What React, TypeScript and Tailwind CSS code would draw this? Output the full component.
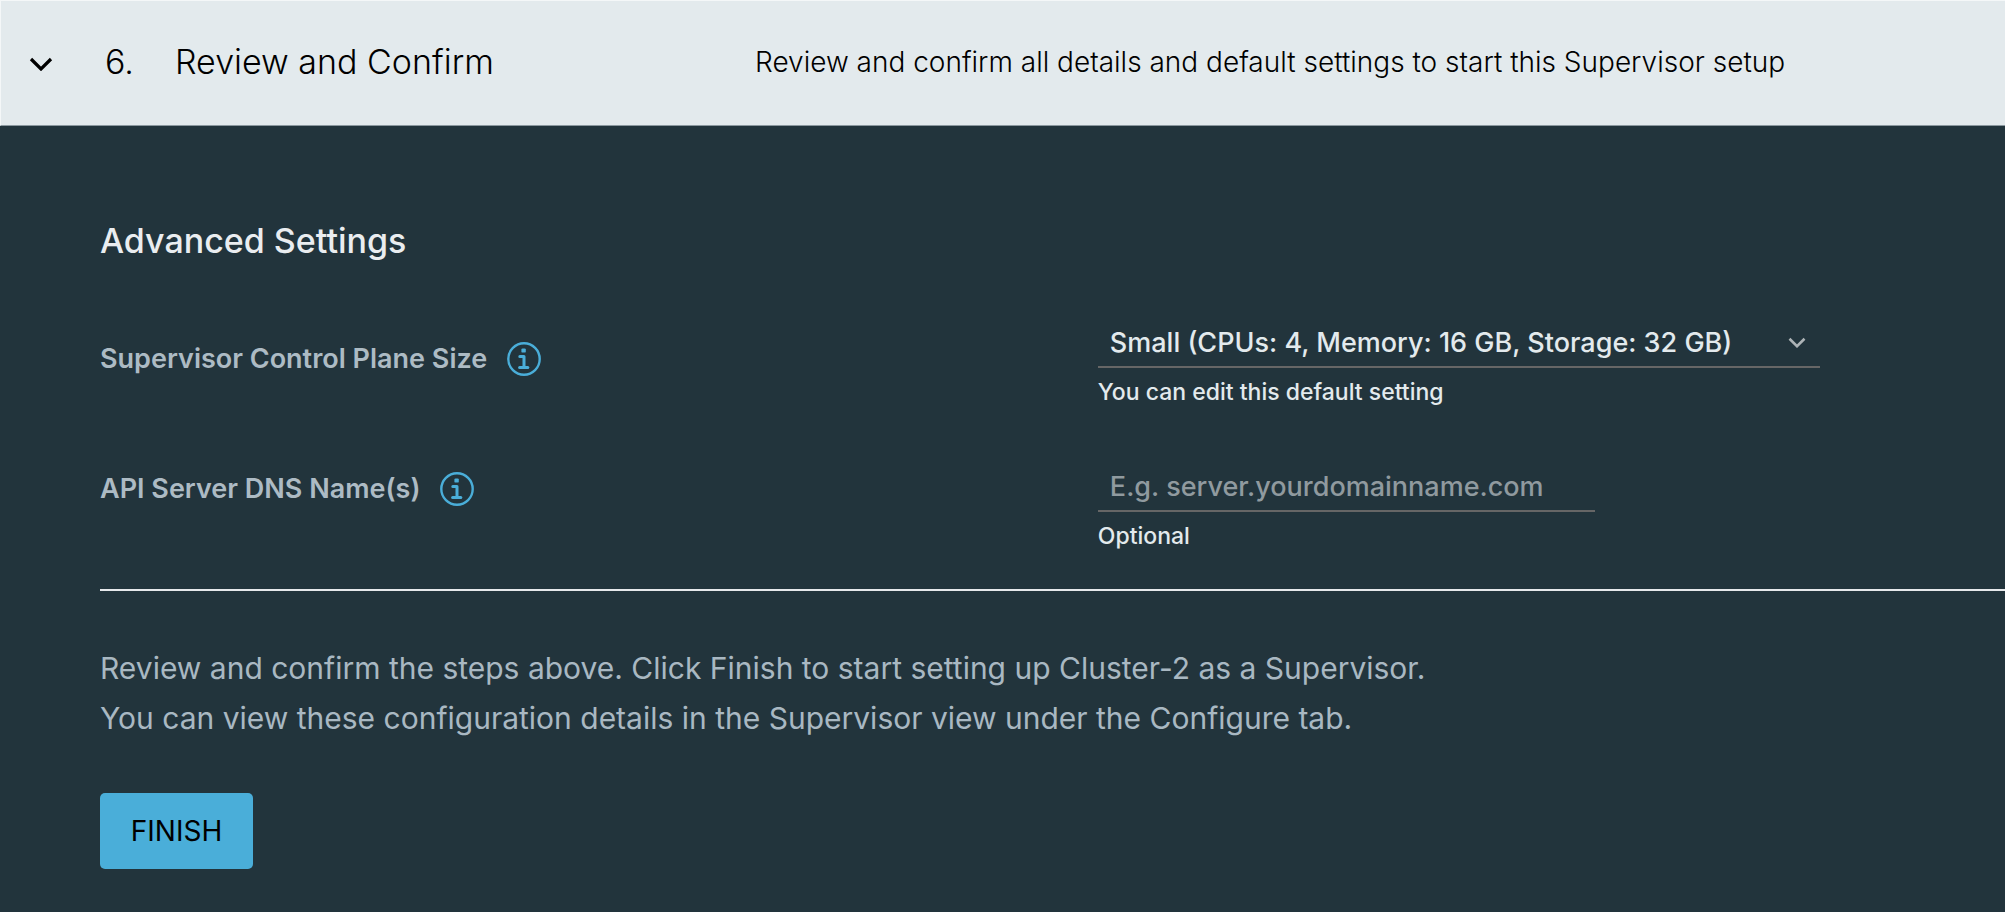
import { useState } from "react";
import type { ReactNode } from "react";

function Chevron({ className, strokeWidth }: { className: string; strokeWidth: number }) {
  return (
    <svg viewBox="0 0 24 14" fill="none" stroke="currentColor" strokeWidth={strokeWidth} className={className} aria-hidden="true">
      <path d="M2 2 L12 12 L22 2" />
    </svg>
  );
}

function InfoButton({ label }: { label: string }) {
  return (
    <button type="button" aria-label={label} className="shrink-0 text-[#4aaed9]">
      <svg viewBox="0 0 34 34" fill="none" className="block size-[34px]" aria-hidden="true">
        <circle cx="17" cy="17" r="15.7" stroke="currentColor" strokeWidth="2.4" />
        <rect x="14.4" y="6.4" width="4.4" height="4.2" rx="1.2" fill="currentColor" />
        <path d="M12.8 14.4 H17 V25.4" stroke="currentColor" strokeWidth="3" strokeLinecap="round" strokeLinejoin="round" />
        <path d="M12.6 25.4 H20.8" stroke="currentColor" strokeWidth="3" strokeLinecap="round" />
      </svg>
    </button>
  );
}

function FieldRow({ id, label, children }: { id: string; label: string; children: ReactNode }) {
  return (
    <div className="grid grid-cols-[11fr_10fr] items-start">
      <div className="flex items-center gap-5 pt-4">
        <label htmlFor={id} className="text-[27px] leading-8 font-semibold text-[#adbbc4]">
          {label}
        </label>
        <InfoButton label={`About ${label}`} />
      </div>
      <div>{children}</div>
    </div>
  );
}

export default function App() {
  const [size, setSize] = useState("small");
  const [dns, setDns] = useState("");

  return (
    <main className="min-h-screen bg-[#22343c] font-['Inter','Liberation_Sans',sans-serif]">
      <header className="flex h-[126px] items-center border-t border-b border-l border-t-[#f4f7f8] border-b-[#8b989f] border-l-[#f4f7f8] bg-[#e3eaed] pl-7 text-black">
        <button type="button" aria-label="Collapse step" className="flex w-[76px] items-center">
          <Chevron className="mt-0.5 h-[14px] w-6" strokeWidth={3.2} />
        </button>
        <h1 className="flex w-[650px] shrink-0 pb-0.5 text-[34px] leading-10 font-light">
          <span className="w-[70px]">6.</span>
          <span>Review and Confirm</span>
        </h1>
        <p className="pb-0.5 text-[28px] leading-10 font-light">
          Review and confirm all details and default settings to start this Supervisor setup
        </p>
      </header>

      <section className="pt-[92px] pb-10 pl-[100px]">
        <h2 className="text-[34px] leading-[46px] font-medium text-[#eaedf0]">Advanced Settings</h2>

        <form onSubmit={(e) => e.preventDefault()}>
          <div className="flex flex-col gap-12 pt-[62px]">
            <FieldRow id="plane-size" label="Supervisor Control Plane Size">
              <div className="grid w-[722px] max-w-full items-center border-b-2 border-[#666666]">
                <select
                  id="plane-size"
                  value={size}
                  onChange={(e) => setSize(e.target.value)}
                  className="col-start-1 row-start-1 h-10 w-full appearance-none bg-transparent pr-12 pb-1.5 pl-3 text-[27px] leading-8 font-medium text-[#e3eaed] outline-none"
                >
                  <option value="small">Small (CPUs: 4, Memory: 16 GB, Storage: 32 GB)</option>
                </select>
                <Chevron className="pointer-events-none col-start-1 row-start-1 mr-[14px] mb-2 h-[11px] w-[18px] justify-self-end text-[#adb3b6]" strokeWidth={3.4} />
              </div>
              <p className="pt-2 text-[23px] leading-8 font-medium text-[#e3eaed]">You can edit this default setting</p>
            </FieldRow>

            <FieldRow id="dns-names" label="API Server DNS Name(s)">
              <div className="pt-3.5">
                <input
                  id="dns-names"
                  type="text"
                  value={dns}
                  onChange={(e) => setDns(e.target.value)}
                  placeholder="E.g. server.yourdomainname.com"
                  className="block h-[42px] w-[497px] max-w-full border-b-2 border-[#666666] bg-transparent pb-2 pl-3 text-[27px] leading-8 font-medium text-[#e3eaed] outline-none placeholder:text-[#909a9f]"
                />
              </div>
              <p className="pt-2 text-[23px] leading-8 font-medium text-[#e3eaed]">Optional</p>
            </FieldRow>
          </div>

          <hr className="mt-[37px] border-t-2 border-[#e6e9eb]" />

          <p className="pt-[52px] text-[30px] leading-[50px] text-[#a9b8c2]">
            Review and confirm the steps above. Click Finish to start setting up Cluster-2 as a Supervisor.
            <br />
            You can view these configuration details in the Supervisor view under the Configure tab.
          </p>

          <button
            type="submit"
            className="mt-[50px] h-[76px] w-[153px] rounded-[5px] bg-[#4aaed9] text-[28px] text-black"
          >
            FINISH
          </button>
        </form>
      </section>
    </main>
  );
}
